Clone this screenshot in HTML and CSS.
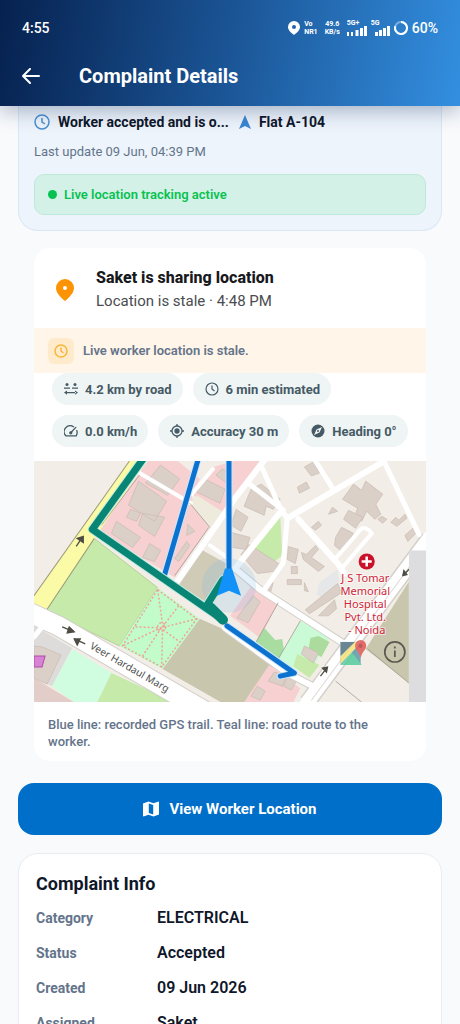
FILE: index.html
```
<!DOCTYPE html>
<html lang="en">
<head>
    <meta charset="UTF-8">
    <meta name="viewport" content="width=device-width, initial-scale=1.0">
    <title>Complaint Details</title>
    <link rel="stylesheet" href="styles.css">
</head>
<body>

    <header class="app-header">
        <div class="status-bar">
            <span class="clock">4:55</span>
            <div class="status-icons">
                <svg width="12" height="14" viewBox="0 0 12 14" fill="#fff"><path fill-rule="evenodd" d="M6 0a6 6 0 0 1 6 6c0 3.500-4 6.500-6 8C4 12.500 0 9.500 0 6a6 6 0 0 1 6-6zm0 4a2 2 0 1 0 0 4 2 2 0 0 0 0-4z"/></svg>
                <span class="tiny">Vo<br>NR1</span>
                <span class="tiny centered">49.6<br>KB/s</span>
                <div class="signal">
                    <span class="tiny">5G+</span>
                    <svg width="20" height="10" viewBox="0 0 20 10" fill="#fff"><path d="M0 6h2v4H0zM4 6h2v4H4zM8.500 4h3v6h-3zM13 2h3v8h-3zM17 0h3v10h-3z"/></svg>
                </div>
                <div class="signal second">
                    <span class="tiny">5G</span>
                    <svg width="15" height="10" viewBox="0 0 15 10" fill="#fff"><path d="M0 6h3v4H0zM4 4h3v6H4zM8 2h3v8H8zM12 0h3v10h-3z"/></svg>
                </div>
                <svg width="14" height="14" viewBox="0 0 14 14" fill="none" stroke-width="2"><circle cx="7" cy="7" r="6" stroke="#7fb0e2"/><path d="M7 1a6 6 0 1 1-5.700 4.200" stroke="#fff"/></svg>
                <span class="battery">60%</span>
            </div>
        </div>
        <div class="title-bar">
            <button class="back" aria-label="Back">
                <svg width="18" height="16" viewBox="0 0 18 16" fill="none" stroke="#fff" stroke-width="2" stroke-linecap="round" stroke-linejoin="round"><path d="M17 8H1M8 1 1 8l7 7"/></svg>
            </button>
            <h1>Complaint Details</h1>
        </div>
    </header>

    <main class="content">

        <section class="tracking-card">
            <div class="tracking-row">
                <svg width="16" height="16" viewBox="0 0 16 16" fill="none" stroke="#4a90d0" stroke-width="1.500"><circle cx="8" cy="8" r="7"/><path d="M8 4v4l3 2"/></svg>
                <span class="tracking-status">Worker accepted and is o...</span>
                <svg width="12" height="14" viewBox="0 0 12 14" fill="#3a86d2"><path d="M6 0l6 14-6-3-6 3z"/></svg>
                <span>Flat A-104</span>
            </div>
            <p class="last-update">Last update 09 Jun, 04:39 PM</p>
            <div class="live-banner"><span class="dot"></span>Live location tracking active</div>
        </section>

        <section class="location-card">
            <div class="location-head">
                <svg width="18" height="22" viewBox="0 0 18 22" fill="#fb9304"><path fill-rule="evenodd" d="M9 0a9 9 0 0 1 9 9c0 5-5 9.500-9 13C5 18.500 0 14 0 9a9 9 0 0 1 9-9zm0 7a2 2 0 1 0 0 4 2 2 0 0 0 0-4z"/></svg>
                <div>
                    <h2>Saket is sharing location</h2>
                    <p>Location is stale · 4:48 PM</p>
                </div>
            </div>
            <div class="stale-banner">
                <span class="stale-icon">
                    <svg width="14" height="14" viewBox="0 0 14 14" fill="none" stroke="#f6b73c" stroke-width="1.500"><circle cx="7" cy="7" r="6"/><path d="M7 3.500V7l2.500 2"/></svg>
                </span>
                Live worker location is stale.
            </div>
            <ul class="chips">
                <li>
                    <svg width="14" height="12" viewBox="0 0 14 12" fill="#455a64"><circle cx="3" cy="1.500" r="1.500"/><circle cx="11" cy="1.500" r="1.500"/><path d="M0 4.500h6v1.300H0zM8 4.500h6v1.300H8zM2 9h10v1.300H2zM0 9.600 3 7.500v4.300zM14 9.600l-3-2.100v4.300z"/></svg>
                    4.2 km by road
                </li>
                <li>
                    <svg width="14" height="14" viewBox="0 0 14 14" fill="none" stroke="#455a64" stroke-width="1.200"><circle cx="7" cy="7" r="6"/><path d="M7 3.500V7l2.500 2"/></svg>
                    6 min estimated
                </li>
                <li>
                    <svg width="14" height="12" viewBox="0 0 14 12" fill="none" stroke="#455a64" stroke-width="1.300" stroke-linecap="round" stroke-linejoin="round"><path d="M9.500 1.700A6 6 0 0 0 1.800 10.800h10.400a6 6 0 0 0 .6-5.300M6.500 8 11.800 2.400"/><circle cx="6.800" cy="7.800" r="1" fill="#455a64"/></svg>
                    0.0 km/h
                </li>
                <li>
                    <svg width="14" height="14" viewBox="0 0 14 14" fill="none" stroke="#455a64" stroke-width="1.300"><circle cx="7" cy="7" r="5"/><circle cx="7" cy="7" r="2" fill="#455a64"/><path d="M7 0v2M7 12v2M0 7h2M12 7h2"/></svg>
                    Accuracy 30 m
                </li>
                <li>
                    <svg width="14" height="14" viewBox="0 0 14 14"><circle cx="7" cy="7" r="6.500" fill="#455a64"/><path d="M11 3 8.500 8.500 3 11l2.500-5.500z" fill="#eff4f5"/><circle cx="7" cy="7" r="1" fill="#455a64"/></svg>
                    Heading 0°
                </li>
            </ul>

            <svg class="map" viewBox="0 0 390 240" role="img" aria-label="Map of the worker route">
                <rect width="390" height="240" fill="#f2eee7"/>

                <!-- land use -->
                <g>
                    <path d="M60 77 123 126 85 184 12 149z" fill="#c6eaaa" stroke="#a9c98e" stroke-width=".8"/>
                    <path d="M123 126 165 157 128 207 85 184z" fill="#c2fccb"/>
                    <path d="M165 157 194 170 239 203 212 240H186L128 207z" fill="#c9c6ae"/>
                    <path d="M168 89 195 104 172 141 142 122z" fill="#d0cbb7"/>
                    <path d="M66 65 105 12 113 0H143L165 18 157 36 174 66 140 116 60 68z" fill="#f7d0d1"/>
                    <path d="M157 33 178 6 200 0H230L200 34 190 53z" fill="#f7d0d1"/>
                    <path d="M155 42 162 34 190 52 175 66z" fill="#eeebdc"/>
                    <path d="M0 164 38 186 18 224 0 216z" fill="#dedbdb"/>
                    <path d="M38 187 77 211 63 240H40L18 224z" fill="#d0fce0"/>
                    <path d="M77 211 140 240H63z" fill="#c6eaaa"/>
                    <path d="M0 216 40 240H0z" fill="#e2cdc9"/>
                    <path d="M245 54 247 94 238 101 219 87z" fill="#c6eaaa"/>
                    <path d="M218 122 243 141 225 176 195 154z" fill="#f7d0d1"/>
                    <path d="M229 166 240 178 247 177 249 190 243 196 221 180z" fill="#a9dca0"/>
                    <path d="M265 159 295 174 273 214 243 197z" fill="#cbfad6"/>
                    <path d="M275 176 283 174 294 180 286 195 273 188z" fill="#abdc9d"/>
                    <path d="M262 192 284 203 274 216 258 204z" fill="#c6eaaa"/>
                    <path d="M234 203 265 226 258 240H209z" fill="#f7d0d1"/>
                    <path d="M373 120V221L330 187z" fill="#c9c6ae"/>
                    <path d="M284 121 302 108 305 130 295 139 281 133z" fill="#e6e7e8"/>
                </g>

                <!-- buildings -->
                <g fill="#dad0c8" stroke="#c9bab0" stroke-width=".7">
                    <path d="M126 4 145 18 133 34 111 22zM104 20 132 40 120 60 94 44zM96 48 106 52 102 60 92 56zM108 52 130 56 120 75 104 64z"/>
                    <path d="M82 60 106 76 98 86 77 72zM115 82 126 89 120 100 108 96zM153 63 160 70 152 74zM155 84 144 100 140 97 152 80z"/>
                    <path d="M168 17 190 28 185 42 162 31zM181 14 187 8 196 12 193 23zM226 23 245 38 238 48 231 45 229 54 209 45 216 28z"/>
                    <path d="M201 48 213 56 206 70 196 64zM196 71 215 76 211 88 197 86zM206 93 214 83 245 103 238 110 222 112z"/>
                    <path d="M262 26 271 21 274 27 264 32zM269 6 278 1 284 12 276 15zM307 38 318 23 326 29 330 20 347 33 340 43 345 53 339 58 331 50 326 60 319 55 322 47z"/>
                    <path d="M308 58 313 49 327 56 320 67zM300 76 306 66 318 72 306 90 299 84z"/>
                    <path d="M276 66 283 60 286 64 280 69zM293 53 297 46 302 50zM346 55 351 58 347 62 342 58zM355 61 360 56 363 59 369 53 371 57 361 65z"/>
                    <path d="M253 85 263 88 260 102 252 98zM266 91 271 93 280 84 283 88 276 96 289 105 283 110 268 98zM256 105H262V112H256zM252 118H266V123H252zM269 121 273 130 269 129z"/>
                    <path d="M270 148 302 122 306 131 274 152zM283 154 299 138 301 147 293 154zM231 125 238 121 235 132 229 130zM202 156 218 134 225 140 213 161z"/>
                    <path d="M239 210 251 213 247 224 233 219zM252 214 261 219 256 228 248 224zM222 224 230 229 225 238 216 234zM269 184 283 191 278 201 266 192z"/>
                    <path d="M0 184 8 185 27 193 13 222 0 216zM369 74 378 66 382 70 372 80z"/>
                </g>
                <path d="M0 194H11L8 205H0z" fill="#d583d2" stroke="#b14bad"/>

                <!-- roads -->
                <path d="M95 0H112L12 149 0 157V134z" fill="#fbfaa7"/>
                <path d="M0 134 95 0M12 149 60 77" fill="none" stroke="#9d9c7a"/>
                <g fill="none" stroke="#d3cfca" stroke-linejoin="round">
                    <path d="M-4 151 24 164 172 250" stroke-width="21"/>
                    <path d="M393 77 272 240" stroke-width="17"/>
                    <path d="M200 107 225 128 312 184M190 166 252 211 285 228" stroke-width="8"/>
                </g>
                <g fill="none" stroke="#fff" stroke-linejoin="round" stroke-linecap="round">
                    <path d="M-4 151 24 164 172 250" stroke-width="19"/>
                    <path d="M393 77 272 240" stroke-width="14"/>
                    <path d="M200 107 225 128 312 184M190 166 252 211 285 228" stroke-width="6"/>
                    <path d="M142 121 200 37 233-6M252 57 347 1M200 107 246 50M263 58 303 103 309 112" stroke-width="6"/>
                    <path d="M213 22 248 49M227 7 245 47 252 57 248 101 230 127M280 0 297 27M348 0 383 73" stroke-width="5"/>
                    <path d="M300 97 325 68Q330 64 336 72L307 106M105 12 156 42M157 33 178 8M175 84 195 98" stroke-width="4"/>
                    <path d="M0 175 8 165" stroke-width="5"/>
                </g>
                <path d="M276 238 384 91" stroke="#dcd8d3" fill="none"/>
                <path d="M243 141 221 180M265 159 243 197M373 221 332 187M300 219 326 240M67 64 105 14M174 66 140 114M155 42 175 66" stroke="#a39b91" fill="none" stroke-width=".8"/>

                <!-- park paths -->
                <g fill="none" stroke="#efa497" stroke-width="1.500" stroke-dasharray="2 2">
                    <path d="M123 128 162 157 127 205 88 184z"/>
                    <path d="M123 128 128 163 127 205M162 157 126 166 88 184M144 144 124 170 108 194M101 165 126 166 145 180"/>
                    <circle cx="127" cy="165" r="4"/>
                </g>

                <text class="street" transform="translate(55 186) rotate(30)">Veer Hardaul Marg</text>
                <g fill="none" stroke="#4d4d45" stroke-width="1.300">
                    <path d="M42 85 48 76M28 165 40 170M51 182 40 177M285 214 292 205M367 114 374 107"/>
                    <path d="M43 77 49 75 49 81zM35 165 40 170 33 171zM46 177 40 177 43 183zM287 206 292 205 291 210zM368 109 367 114 371 113z" fill="#4d4d45"/>
                </g>

                <!-- recorded trail and road route -->
                <circle cx="194" cy="124" r="27" fill="#7db8ec" fill-opacity=".2"/>
                <g fill="none" stroke-linecap="round" stroke-linejoin="round">
                    <path d="M164-4 130 113M194-4V122M192 164 259 211 245 214" stroke="#cfe5fa" stroke-width="7"/>
                    <path d="M164-4 130 113M194-4V122M192 164 259 211 245 214" stroke="#0c72cf" stroke-width="5"/>
                    <path d="M110-4 58 68 188 158 173 142 188 118" stroke="#c2e9df" stroke-width="9"/>
                    <path d="M110-4 58 68 188 158 173 142 188 118" stroke="#088574" stroke-width="7"/>
                    <path d="M176 146 188 158" stroke="#088574" stroke-width="10"/>
                </g>
                <path d="M190 107H197L206 134 194 129 182 134z" fill="#1292f8"/>

                <circle cx="331" cy="100" r="8" fill="#cb1029"/>
                <path d="M331 95v10M326 100h10" stroke="#fff" stroke-width="2.500"/>
                <text class="hospital" x="331" y="120">
                    <tspan x="331">J S Tomar</tspan>
                    <tspan x="331" dy="13">Memorial</tspan>
                    <tspan x="331" dy="13">Hospital</tspan>
                    <tspan x="331" dy="13">Pvt. Ltd.</tspan>
                    <tspan x="331" dy="13">- Noida</tspan>
                </text>

                <rect x="373" y="89" width="17" height="151" fill="#dddddf"/>

                <!-- open in maps -->
                <g opacity=".8">
                    <path d="M305 180H325V203H305z" fill="#5795a8"/>
                    <path d="M305 203 316 190 326 203z" fill="#4dcb99"/>
                    <path d="M305 194 319 180H326L305 202z" fill="#f4df72"/>
                    <path d="M305 180H319L305 194z" fill="#486779"/>
                    <path d="M325 178a5.500 5.500 0 0 1 5.500 6c0 4-4 5-5.500 12-1.500-7-5.500-8-5.500-12a5.500 5.500 0 0 1 5.500-6z" fill="#e04d4d"/>
                    <circle cx="325" cy="184" r="2" fill="#a83939"/>
                </g>
                <g fill="none" stroke="#5b5a50" stroke-width="1.700">
                    <circle cx="359" cy="190" r="10"/>
                    <path d="M359 188.500v6.500M359 184.500v2"/>
                </g>
            </svg>

            <p class="map-note">Blue line: recorded GPS trail. Teal line: road route to the worker.</p>
        </section>

        <button class="view-btn">
            <svg width="16" height="16" viewBox="0 0 16 16" fill="#fff"><path fill-rule="evenodd" d="M0 2.500 5.500.5l5 1.800 5-1.800.5.500v12.500l-5.500 2-5-1.800-5 1.800-.5-.500zM5.800 2.600v9.300l4.400 1.500V4.100z"/></svg>
            View Worker Location
        </button>

        <section class="info-card">
            <h2>Complaint Info</h2>
            <dl>
                <div><dt>Category</dt><dd>ELECTRICAL</dd></div>
                <div><dt>Status</dt><dd>Accepted</dd></div>
                <div><dt>Created</dt><dd>09 Jun 2026</dd></div>
                <div><dt>Assigned</dt><dd>Saket</dd></div>
            </dl>
        </section>

    </main>

</body>
</html>
```
FILE: styles.css
```
:root {
    --bg-color: #f8fafc;
    --text-dark: #0f172a;
    --text-muted: #64748b;
    --primary: #006fc9;
    --chip-bg: #eff4f5;
    --chip-text: #455a64;
}

* {
    box-sizing: border-box;
    margin: 0;
    padding: 0;
}

body {
    font-family: Roboto, sans-serif;
    display: flex;
    flex-direction: column;
    height: 100vh;
    overflow: hidden;
    background-color: var(--bg-color);
    color: var(--text-dark);
}

svg {
    display: block;
    flex-shrink: 0;
}

button {
    border: none;
    font-family: inherit;
    cursor: pointer;
}

/* Header */
.app-header {
    flex-shrink: 0;
    height: 106px;
    padding: 16px 22px 0;
    background: linear-gradient(100deg, #06214f 0%, #1b5596 50%, #338fe0 100%);
    color: #fff;
    box-shadow: 0 4px 20px rgba(15, 40, 90, 0.35);
    z-index: 1;
}

.status-bar {
    display: flex;
    align-items: center;
    justify-content: space-between;
    height: 24px;
}

.clock,
.battery {
    font-size: 14px;
    font-weight: 500;
}

.status-icons {
    display: flex;
    align-items: center;
    gap: 4px;
}

.tiny {
    font-size: 7px;
    line-height: 8px;
    font-weight: 700;
}

.centered {
    margin: 0 3px;
    text-align: center;
}

.signal {
    display: flex;
    flex-direction: column;
    align-items: flex-end;
}

.signal .tiny {
    align-self: flex-start;
    line-height: 5px;
}

.second {
    width: 19px;
}

.title-bar {
    display: flex;
    align-items: center;
    gap: 39px;
    height: 72px;
}

.back {
    background: none;
}

h1 {
    font-size: 20px;
    font-weight: 700;
}

/* Scrolling content */
.content {
    flex: 1;
    min-height: 0;
    padding: 0 18px;
    overflow-y: auto;
    scrollbar-width: none;
}

.tracking-card {
    padding: 6px 15px 15px;
    background-color: #edf4fb;
    border: 1px solid #dae7f5;
    border-top: none;
    border-radius: 0 0 20px 20px;
}

.tracking-row {
    display: flex;
    align-items: center;
    gap: 8px;
    font-size: 14px;
    line-height: 20px;
    font-weight: 700;
}

.tracking-status {
    margin-right: 2px;
}

.last-update {
    margin-top: 12px;
    font-size: 13px;
    line-height: 16px;
    color: var(--text-muted);
}

.live-banner {
    display: flex;
    align-items: center;
    gap: 7px;
    height: 41px;
    margin-top: 14px;
    padding: 0 13px;
    background-color: #d4f1e8;
    border: 1px solid #bfe9d7;
    border-radius: 10px;
    color: #06c251;
    font-size: 13px;
    font-weight: 600;
}

.dot {
    width: 9px;
    height: 9px;
    border-radius: 50%;
    background-color: #06c251;
}

/* Live location card */
.location-card {
    margin: 17px 16px 0;
    background-color: #fff;
    border-radius: 16px;
    overflow: hidden;
}

.location-head {
    display: flex;
    align-items: center;
    gap: 22px;
    height: 80px;
    padding: 4px 22px 0;
}

.location-head h2 {
    font-size: 16px;
    line-height: 22px;
    font-weight: 800;
    color: #17191c;
}

.location-head p {
    font-size: 15px;
    line-height: 24px;
    color: #4a4c50;
}

.stale-banner {
    display: flex;
    align-items: center;
    gap: 9px;
    height: 45px;
    padding: 0 14px;
    background-color: #fff5e8;
    color: var(--text-muted);
    font-size: 13px;
    font-weight: 600;
}

.stale-icon {
    display: flex;
    align-items: center;
    justify-content: center;
    width: 26px;
    height: 26px;
    border-radius: 6px;
    background-color: #ffebcc;
}

.chips {
    display: flex;
    flex-wrap: wrap;
    gap: 10px;
    padding: 0 18px 14px;
    list-style: none;
}

.chips li {
    display: flex;
    align-items: center;
    gap: 7px;
    height: 32px;
    padding: 0 11px 0 12px;
    background-color: var(--chip-bg);
    border-radius: 16px;
    color: var(--chip-text);
    font-size: 13px;
    font-weight: 700;
}

.map {
    width: 100%;
    height: auto;
}

.street {
    font: 10px "Noto Sans", sans-serif;
    fill: #4d4d4d;
}

.hospital {
    font: 11px "Noto Sans", sans-serif;
    fill: #cf1f38;
    stroke: #fff;
    stroke-width: 2px;
    stroke-opacity: 0.6;
    paint-order: stroke;
    text-anchor: middle;
}

.map-note {
    padding: 14px 32px 11px 14px;
    font-size: 13px;
    line-height: 17px;
    font-weight: 500;
    color: var(--text-muted);
}

.view-btn {
    display: flex;
    align-items: center;
    justify-content: center;
    gap: 10px;
    width: 100%;
    height: 52px;
    margin-top: 22px;
    border-radius: 16px;
    background-color: var(--primary);
    color: #fff;
    font-size: 15px;
    font-weight: 700;
}

/* Complaint info */
.info-card {
    margin-top: 18px;
    padding: 18px 17px;
    background-color: #fff;
    border: 1px solid #e8edf2;
    border-radius: 20px;
}

.info-card h2 {
    margin-bottom: 12px;
    font-size: 18px;
    line-height: 24px;
    font-weight: 700;
}

.info-card dl div {
    display: flex;
    height: 35px;
}

.info-card dt {
    width: 121px;
    font-size: 14px;
    line-height: 20px;
    font-weight: 700;
    color: var(--text-muted);
}

.info-card dd {
    font-size: 16px;
    line-height: 20px;
    font-weight: 600;
}
```
